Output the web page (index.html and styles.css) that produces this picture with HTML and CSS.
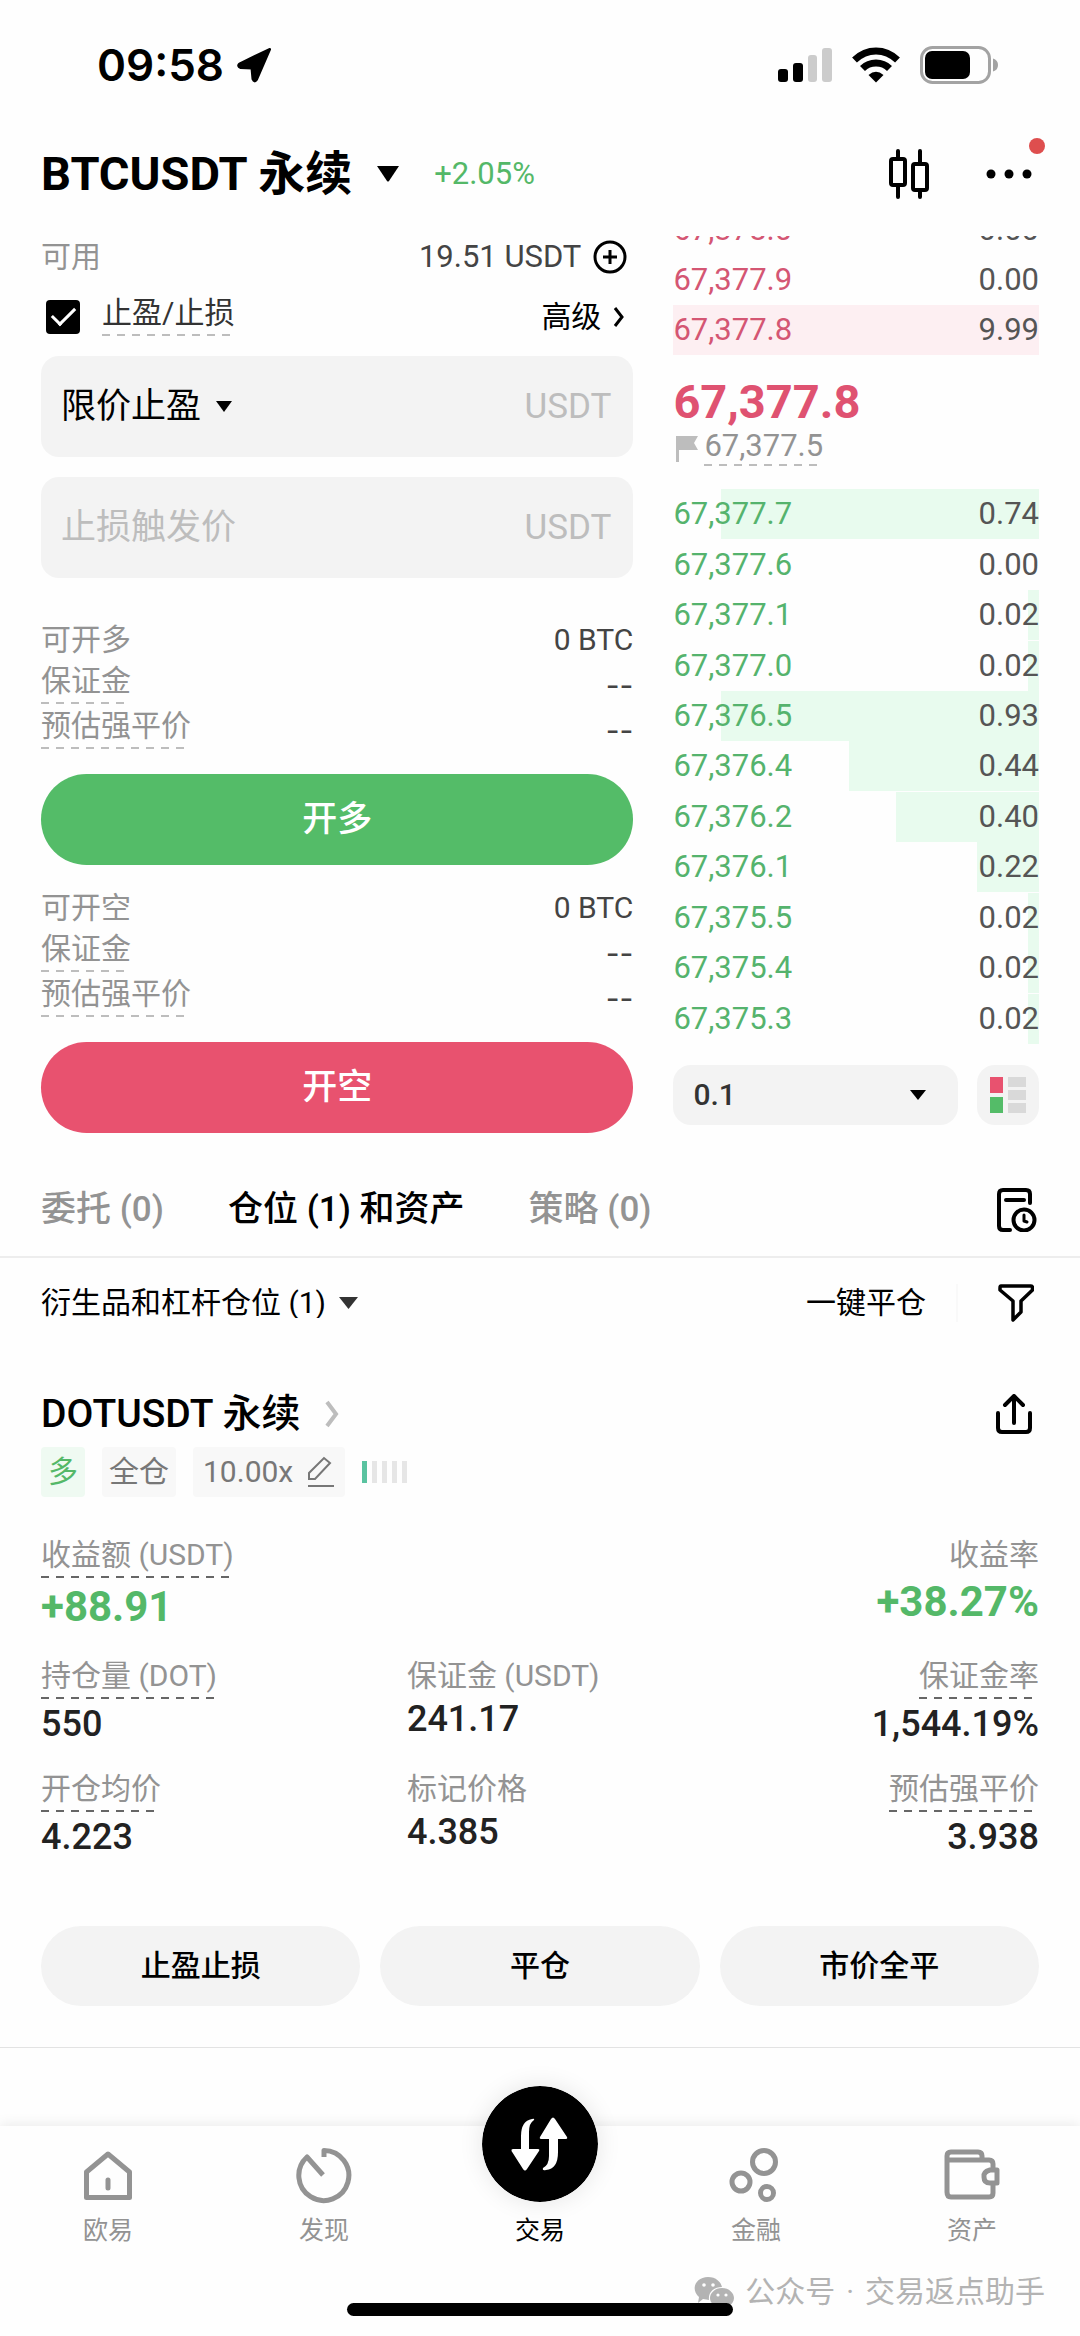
FILE: index.html
```html
<!DOCTYPE html>
<html lang="zh-CN">
<head>
<meta charset="utf-8">
<meta name="viewport" content="width=device-width, initial-scale=1">
<title>BTCUSDT 永续</title>
<link rel="stylesheet" href="styles.css">
</head>
<body>
<div class="status">
  <span class="clock">09:58</span>
  <svg class="location" width="36" height="36" viewBox="0 0 36 36"><path d="M33.500 2.500 3.500 17Q1.500 19 4.500 20.500L16 21 17 32Q18.500 35.500 20.500 32.500Z" stroke="#000" stroke-width="3" stroke-linejoin="round"/></svg>
  <div class="status-icons">
    <svg width="54" height="36" viewBox="0 0 54 36"><rect x="0" y="22" width="10" height="13" rx="3"/><rect x="15" y="16" width="10" height="19" rx="3"/><rect x="30" y="8" width="9" height="27" rx="3" fill="#ccc"/><rect x="44" y="1" width="10" height="34" rx="3" fill="#ccc"/></svg>
    <svg width="48" height="36" viewBox="0 0 48 36"><g fill="none" stroke="#000" stroke-width="7"><path d="M2.500 13Q12 4 24 4T45.500 13"/><path d="M10.500 21.500Q16 16 24 16T37.500 21.500"/></g><path d="M24 35.500 16.500 28Q24 21.500 31.500 28Z"/></svg>
    <svg width="78" height="38" viewBox="0 0 78 38"><rect x="1.500" y="1.500" width="68" height="35" rx="11" fill="none" stroke="#a3a3a3" stroke-width="3"/><rect x="5" y="5" width="45" height="28" rx="7"/><path d="M73 12.500Q78 14 78 19T73 25.500Z" fill="#a3a3a3"/></svg>
  </div>
</div>

<header class="pair">
  <button class="pair-name">BTCUSDT 永续
    <svg width="24" height="16" viewBox="0 0 24 16"><path d="M1 0H23L13 15Q12 16 11 15Z"/></svg>
  </button>
  <span class="change">+2.05%</span>
  <div class="pair-tools">
    <button aria-label="K线"><svg width="42" height="50" viewBox="0 0 42 50" fill="none" stroke="#000" stroke-width="4" stroke-linecap="round"><rect x="3" y="10" width="14" height="26" rx="2"/><path d="M10 2V10M10 36V48"/><rect x="25" y="15" width="14" height="26" rx="2"/><path d="M32 2V15M32 41V48"/></svg></button>
    <button class="more" aria-label="更多"><svg width="46" height="10" viewBox="0 0 46 10"><circle cx="5" cy="5" r="4.500"/><circle cx="23" cy="5" r="4.500"/><circle cx="41" cy="5" r="4.500"/></svg><span class="badge"></span></button>
  </div>
</header>

<main>
  <section class="trade">
    <form class="order">
      <div class="available">
        <span class="muted">可用</span>
        <span class="amount">19.51 USDT</span>
        <button type="button" aria-label="划转"><svg width="34" height="34" viewBox="0 0 34 34" fill="none" stroke="#000" stroke-width="3"><circle cx="17" cy="17" r="15"/><path d="M17 10V24M10 17H24"/></svg></button>
      </div>
      <div class="tpsl">
        <input type="checkbox" id="tpsl" checked>
        <label for="tpsl" class="hint">止盈/止损</label>
        <button type="button" class="advanced">高级
          <svg width="12" height="22" viewBox="0 0 12 22" fill="none" stroke="#000" stroke-width="3"><path d="M2 2 9 11 2 20"/></svg>
        </button>
      </div>
      <div class="fields">
        <div class="field">
          <select aria-label="止盈类型"><option>限价止盈</option></select>
          <svg width="16" height="11" viewBox="0 0 16 11"><path d="M0 0H16L8 11Z"/></svg>
          <input type="text" aria-label="止盈价">
          <span class="unit">USDT</span>
        </div>
        <div class="field">
          <input type="text" aria-label="止损触发价" placeholder="止损触发价">
          <span class="unit">USDT</span>
        </div>
      </div>
      <div class="side">
        <dl>
          <div><dt>可开多</dt><dd>0 BTC</dd></div>
          <div><dt class="hint">保证金</dt><dd class="empty">--</dd></div>
          <div><dt class="hint">预估强平价</dt><dd class="empty">--</dd></div>
        </dl>
        <button type="button" class="submit buy">开多</button>
      </div>
      <div class="side">
        <dl>
          <div><dt>可开空</dt><dd>0 BTC</dd></div>
          <div><dt class="hint">保证金</dt><dd class="empty">--</dd></div>
          <div><dt class="hint">预估强平价</dt><dd class="empty">--</dd></div>
        </dl>
        <button type="button" class="submit sell">开空</button>
      </div>
    </form>

    <div class="book">
      <div class="asks-view">
        <table class="levels asks">
          <tr style="--depth:0%"><td>67,378.0</td><td>0.00</td></tr>
          <tr style="--depth:0%"><td>67,377.9</td><td>0.00</td></tr>
          <tr style="--depth:100%"><td>67,377.8</td><td>9.99</td></tr>
        </table>
      </div>
      <div class="last">
        <strong>67,377.8</strong>
        <div class="mark">
          <svg width="22" height="26" viewBox="0 0 22 26"><path d="M0 0H22L18 7 22 14H3V26H0Z" fill="#bdbdbd"/></svg>
          <span class="hint">67,377.5</span>
        </div>
      </div>
      <table class="levels bids">
        <tr style="--depth:87%"><td>67,377.7</td><td>0.74</td></tr>
        <tr style="--depth:0%"><td>67,377.6</td><td>0.00</td></tr>
        <tr style="--depth:3%"><td>67,377.1</td><td>0.02</td></tr>
        <tr style="--depth:3%"><td>67,377.0</td><td>0.02</td></tr>
        <tr style="--depth:87%"><td>67,376.5</td><td>0.93</td></tr>
        <tr style="--depth:52%"><td>67,376.4</td><td>0.44</td></tr>
        <tr style="--depth:39%"><td>67,376.2</td><td>0.40</td></tr>
        <tr style="--depth:17%"><td>67,376.1</td><td>0.22</td></tr>
        <tr style="--depth:3%"><td>67,375.5</td><td>0.02</td></tr>
        <tr style="--depth:3%"><td>67,375.4</td><td>0.02</td></tr>
        <tr style="--depth:3%"><td>67,375.3</td><td>0.02</td></tr>
      </table>
      <div class="book-tools">
        <div class="step">
          <select aria-label="价格精度"><option>0.1</option></select>
          <svg width="16" height="10" viewBox="0 0 16 10"><path d="M0 0H16L8 10Z"/></svg>
        </div>
        <button type="button" class="layout" aria-label="盘口布局"><svg width="36" height="36" viewBox="0 0 36 36"><path fill="#e8526f" d="M0 0H13V16H0Z"/><path fill="#54bc68" d="M0 20H13V36H0Z"/><path fill="#d9d9d9" d="M18 0H36V10H18ZM18 13H36V23H18ZM18 26H36V36H18Z"/></svg></button>
      </div>
    </div>
  </section>

  <div class="tabs">
    <button>委托 (0)</button>
    <button class="active">仓位 (1) 和资产</button>
    <button>策略 (0)</button>
    <button class="end" aria-label="历史"><svg width="40" height="44" viewBox="0 0 40 44" fill="none" stroke="#000" stroke-width="4" stroke-linecap="round" stroke-linejoin="round"><path d="M33 15V6Q33 2 29 2H6Q2 2 2 6V38Q2 42 6 42H13M9 12H27"/><circle cx="27" cy="32" r="10.500"/><path d="M27 27V33L30 34" stroke-width="3"/></svg></button>
  </div>

  <div class="filter">
    <select aria-label="仓位类型"><option>衍生品和杠杆仓位 (1)</option></select>
    <svg width="19" height="12" viewBox="0 0 19 12"><path d="M0 0H19L9.500 12Z" fill="#333"/></svg>
    <button class="close-all">一键平仓</button>
    <button class="funnel" aria-label="筛选"><svg width="36" height="38" viewBox="0 0 36 38" fill="none" stroke="#000" stroke-width="3.500" stroke-linejoin="round"><path d="M3 2H33Q34.500 2 34.500 4V6L23 17V28L15 36V17L2 6V4Q2 2 3 2Z"/></svg></button>
  </div>

  <article class="position">
    <div class="position-head">
      <a href="#dot">DOTUSDT 永续
        <svg width="16" height="28" viewBox="0 0 16 28" fill="none" stroke="#bdbdbd" stroke-width="4"><path d="M3 2 12 14 3 26"/></svg>
      </a>
      <button aria-label="分享"><svg width="36" height="40" viewBox="0 0 36 40" fill="none" stroke="#000" stroke-width="4" stroke-linecap="round" stroke-linejoin="round"><path d="M2 19V34Q2 38 6 38H30Q34 38 34 34V19M18 29V2M9 11 18 2 27 11"/></svg></button>
    </div>
    <div class="tags">
      <span class="tag long">多</span>
      <span class="tag">全仓</span>
      <button class="tag leverage">10.00x
        <svg width="28" height="32" viewBox="0 0 28 32" fill="none" stroke="#777" stroke-width="2"><path d="M1 30H27M2 23V17L17 2 23 7 8 23Z"/></svg>
      </button>
      <svg width="46" height="22" viewBox="0 0 46 22"><path fill="#5ac3a0" d="M0 0H5V22H0Z"/><path fill="#e6e6e6" d="M10 0H15V22H10ZM20 0H25V22H20ZM30 0H35V22H30ZM40 0H45V22H40Z"/></svg>
    </div>
    <dl class="metrics">
      <div class="profit"><dt><span class="hint">收益额 (USDT)</span></dt><dd>+88.91</dd></div>
      <div class="profit last-col"><dt>收益率</dt><dd>+38.27%</dd></div>
      <div><dt><span class="hint">持仓量 (DOT)</span></dt><dd>550</dd></div>
      <div><dt>保证金 (USDT)</dt><dd>241.17</dd></div>
      <div class="last-col"><dt><span class="hint">保证金率</span></dt><dd>1,544.19%</dd></div>
      <div><dt><span class="hint">开仓均价</span></dt><dd>4.223</dd></div>
      <div><dt>标记价格</dt><dd>4.385</dd></div>
      <div class="last-col"><dt><span class="hint">预估强平价</span></dt><dd>3.938</dd></div>
    </dl>
    <div class="actions">
      <button>止盈止损</button>
      <button>平仓</button>
      <button>市价全平</button>
    </div>
  </article>
</main>

<footer>
  <nav>
    <a href="#home"><svg width="56" height="56" viewBox="0 0 56 56"><path d="M6.500 24 28 6 49.500 24V49.500H6.500ZM28 32V40" fill="none" stroke="#939393" stroke-width="5" stroke-linejoin="round" stroke-linecap="round"/></svg>欧易</a>
    <a href="#discover"><svg width="56" height="56" viewBox="0 0 56 56"><path d="M28 9V2.500A25 25 0 1 1 11 9L27 27" fill="none" stroke="#939393" stroke-width="5" stroke-linejoin="round"/></svg>发现</a>
    <a href="#trade" class="current"><svg width="116" height="116" viewBox="0 0 116 116"><circle cx="58" cy="58" r="58"/><g fill="#fff"><path d="M52 34Q47 37 47 46V63H56Q58 63 57 65L45 83Q43 86 41 83L29.500 65Q29 63 31 63H39V50Q39 35 50 33Q53 32 52 34Z"/><path d="M61 82Q67 79 67 70V53H60Q57 53 58 51L69 33Q71 30 73 33L85 51Q86 53 83 53H76V66Q76 83 64 84Q60 85 61 82Z"/></g></svg>交易</a>
    <a href="#finance"><svg width="56" height="56" viewBox="0 0 56 56" fill="none" stroke="#939393" stroke-width="5"><circle cx="36" cy="14" r="11.500"/><circle cx="13" cy="34" r="9"/><circle cx="39" cy="45" r="6.500"/></svg>金融</a>
    <a href="#assets"><svg width="56" height="56" viewBox="0 0 56 56" fill="none" stroke="#939393" stroke-width="5" stroke-linejoin="round"><path d="M49 22V16Q49 12 45 12H3M38 12V8Q38 4 34 4H7Q3 4 3 8V44Q3 49 7 49H45Q49 49 49 45V35M53 22H46Q39 24 40 29 40 35 46 35H53Z"/></svg>资产</a>
  </nav>
  <div class="account">
    <svg width="40" height="32" viewBox="0 0 40 32"><path fill="#b3b3b3" d="M14 1C22 1 27 6 28 11 20 11 14 16 15 24L9 23 4 27 5 21C-4 13 2 1 14 1Z"/><path fill="#b3b3b3" d="M28 12C35 12 40 17 40 22 40 25 38 28 36 29L37 32 32 30C23 33 16 28 16 22 16 17 21 12 28 12Z"/><g fill="#fff"><circle cx="10" cy="9" r="1.800"/><circle cx="19" cy="9" r="1.800"/><circle cx="24" cy="19" r="1.600"/><circle cx="32" cy="19" r="1.600"/></g></svg>
    <span>公众号</span><span>·</span><span>交易返点助手</span>
  </div>
  <div class="home-bar"></div>
</footer>
</body>
</html>
```
FILE: styles.css
```css
* {
  box-sizing: border-box;
}

body {
  margin: 0;
  min-height: 100vh;
  display: flex;
  flex-direction: column;
  background: #fefefe;
  color: #000;
  font: 400 30px/30px Roboto, "Noto Sans CJK SC", sans-serif;
}

button,
input,
select {
  margin: 0;
  padding: 0;
  border: 0;
  border-radius: 0;
  background: none;
  color: inherit;
  font: inherit;
  outline: 0;
}

select {
  appearance: none;
}

button,
svg {
  flex: none;
}

button svg,
a svg {
  display: block;
}

a {
  color: inherit;
  text-decoration: none;
}

dl,
dd {
  margin: 0;
}

.muted {
  color: #939393;
}

.hint {
  display: inline-block;
  padding-bottom: 8px;
  background: repeating-linear-gradient(90deg, #bdbdbd 0 8px, transparent 8px 15px) bottom / 100% 2px no-repeat;
}

/* Status bar */
.status {
  display: flex;
  align-items: center;
  height: 130px;
  padding: 0 82px 0 97px;
}

.clock {
  font: 600 44px/50px Inter, sans-serif;
}

.location {
  margin-left: 12px;
}

.status-icons {
  display: flex;
  align-items: center;
  gap: 20px;
  margin-left: auto;
}

/* Trading pair */
.pair {
  display: flex;
  align-items: center;
  height: 88px;
  padding: 0 41px;
}

.pair-name {
  display: flex;
  align-items: center;
  gap: 24px;
  font-size: 47px;
  font-weight: 700;
  line-height: 56px;
}

.change {
  margin-left: 34px;
  color: #54b868;
  font-size: 31px;
}

.pair-tools {
  display: flex;
  align-items: center;
  gap: 56px;
  margin-left: auto;
  padding-right: 7px;
}

.more {
  position: relative;
}

.badge {
  position: absolute;
  top: -31px;
  right: -13px;
  width: 16px;
  height: 16px;
  border-radius: 50%;
  background: #de4e4e;
}

/* Order form and order book */
.trade {
  display: grid;
  grid-template-columns: 593fr 366fr;
  gap: 40px;
  padding: 18px 41px 0;
}

.order,
.book {
  display: flex;
  flex-direction: column;
  min-width: 0;
}

.available {
  display: flex;
  align-items: center;
  height: 42px;
  padding-right: 6px;
}

.amount {
  margin: 0 12px 0 auto;
  color: #444;
  font-size: 31px;
}

.tpsl {
  display: flex;
  align-items: center;
  height: 78px;
  padding: 0 8px 0 5px;
}

.tpsl input {
  appearance: none;
  width: 34px;
  height: 34px;
  margin-right: 22px;
  border-radius: 4px;
  background: #000;
  display: grid;
  place-items: center;
}

.tpsl input:checked::before {
  content: "";
  width: 20px;
  height: 10px;
  margin-bottom: 7px;
  border: solid #fff;
  border-width: 0 0 3px 3px;
  rotate: -45deg;
}

.tpsl label {
  color: #333;
}

.advanced {
  display: flex;
  align-items: center;
  gap: 12px;
  margin-left: auto;
}

.fields {
  display: flex;
  flex-direction: column;
  gap: 20px;
  margin-bottom: 43px;
}

.field {
  display: flex;
  align-items: center;
  height: 101px;
  padding: 0 22px 0 20px;
  border-radius: 18px;
  background: #f3f3f3;
  font-size: 35px;
  line-height: 50px;
}

.field select {
  margin-right: 14px;
}

.field input {
  flex: 1;
  width: 0;
  min-width: 0;
  height: 50px;
}

.field input::placeholder,
.unit {
  color: #bdbdbd;
}

.side dl {
  display: grid;
  gap: 7px;
}

.side dl div {
  display: flex;
  align-items: center;
  justify-content: space-between;
  height: 38px;
}

dt {
  color: #939393;
}

.side dd {
  color: #444;
}

.side .empty {
  font-family: Inter, sans-serif;
}

.submit {
  width: 100%;
  height: 91px;
  margin: 25px 0 24px;
  border-radius: 46px;
  color: #fff;
  font-size: 35px;
  font-weight: 500;
}

.side:last-child .submit {
  margin-bottom: 0;
}

.buy {
  background: #54bc68;
}

.sell {
  background: #e8526f;
}

.asks-view {
  display: flex;
  flex-direction: column;
  justify-content: flex-end;
  height: 119px;
  overflow: hidden;
}

.levels {
  flex: none;
  width: 100%;
  border-collapse: collapse;
  font-size: 31px;
}

.levels tr {
  background: linear-gradient(var(--tint), var(--tint)) right / var(--depth) 100% no-repeat;
}

.levels td {
  padding: 0;
  color: #555;
}

.levels td:last-child {
  text-align: right;
}

.asks {
  --tint: #fdeff2;
  height: 150px;
}

.asks td:first-child {
  color: #d45673;
}

.bids {
  --tint: #e8fbee;
  height: 555px;
}

.bids td:first-child {
  color: #55b36d;
}

.last {
  padding: 20px 0 23px;
}

.last strong {
  display: block;
  margin-bottom: 2px;
  color: #df5271;
  font-size: 47px;
  line-height: 54px;
}

.mark {
  display: flex;
  align-items: center;
  gap: 6px;
  padding-left: 3px;
  color: #939393;
  font-size: 31px;
}

.mark .hint {
  padding-bottom: 5px;
}

.book-tools {
  display: flex;
  gap: 19px;
  margin-top: 21px;
}

.step {
  flex: 1;
  display: flex;
  align-items: center;
  height: 60px;
  padding: 0 32px 0 20px;
  border-radius: 18px;
  background: #f3f3f3;
  font-weight: 500;
}

.step select {
  flex: 1;
  color: #333;
}

.layout {
  display: grid;
  place-items: center;
  width: 62px;
  border-radius: 18px;
  background: #f3f3f3;
}

/* Tabs */
.tabs {
  display: flex;
  align-items: center;
  gap: 64px;
  height: 94px;
  margin-top: 31px;
  padding: 0 43px 0 41px;
  border-bottom: 2px solid #ededed;
  color: #939393;
  font-size: 35px;
  font-weight: 500;
}

.active {
  color: #000;
}

.end {
  margin-left: auto;
}

.filter {
  display: flex;
  align-items: center;
  gap: 12px;
  height: 90px;
  padding: 0 46px 0 41px;
}

.close-all {
  margin-left: auto;
}

.funnel {
  margin-left: 18px;
  padding-left: 40px;
  border-left: 2px solid #f9f9f9;
}

/* Open position */
.position {
  padding: 42px 41px 41px;
  border-bottom: 1px solid #e3e3e3;
}

.position-head {
  display: flex;
  align-items: center;
  justify-content: space-between;
  height: 48px;
  padding-right: 7px;
}

.position-head a {
  display: flex;
  align-items: center;
  gap: 24px;
  font-size: 39px;
  font-weight: 500;
}

.tags {
  display: flex;
  align-items: center;
  gap: 17px;
  margin: 9px 0 43px;
}

.tag {
  display: flex;
  align-items: center;
  gap: 14px;
  height: 50px;
  padding: 0 7px;
  border-radius: 4px;
  background: #f8f8f8;
  color: #777;
}

.long {
  background: #effaf2;
  color: #54b868;
}

.leverage {
  padding: 0 10px;
}

.metrics {
  display: grid;
  grid-template-columns: 11fr 8fr 11fr;
  row-gap: 32px;
}

.metrics dt {
  min-height: 33px;
  margin-bottom: 7px;
}

.metrics .hint {
  background-image: repeating-linear-gradient(90deg, #666 0 8px, transparent 8px 15px);
  vertical-align: top;
}

.metrics dd {
  color: #222;
  font-size: 36px;
  font-weight: 500;
  line-height: 36px;
}

.metrics .profit dd {
  color: #54b868;
  font-size: 42px;
  font-weight: 700;
  line-height: 44px;
}

.last-col {
  grid-column: 3;
  text-align: right;
}

.actions {
  display: grid;
  grid-template-columns: repeat(3, 1fr);
  gap: 20px;
  margin-top: 71px;
}

.actions button {
  height: 80px;
  border-radius: 40px;
  background: #f3f3f3;
  font-weight: 500;
}

/* Bottom navigation */
footer {
  position: relative;
  margin-top: auto;
  padding: 22px 0 24px;
  background: #fefefe;
  box-shadow: 0 -2px 12px rgba(0, 0, 0, 0.08);
}

nav {
  display: grid;
  grid-template-columns: repeat(5, 1fr);
}

nav a {
  display: flex;
  flex-direction: column;
  align-items: center;
  gap: 12px;
  color: #939393;
  font-size: 25px;
}

nav .current {
  color: #000;
}

.current svg {
  margin: -62px 0 2px;
  border-radius: 50%;
  box-shadow: 0 0 24px rgba(0, 0, 0, 0.1);
}

.account {
  display: flex;
  align-items: center;
  justify-content: flex-end;
  gap: 11px;
  height: 40px;
  margin-top: 26px;
  padding-right: 35px;
  color: #b3b3b3;
}

.home-bar {
  position: absolute;
  bottom: 20px;
  left: 50%;
  width: 386px;
  height: 13px;
  margin-left: -193px;
  border-radius: 7px;
  background: #000;
}
```
